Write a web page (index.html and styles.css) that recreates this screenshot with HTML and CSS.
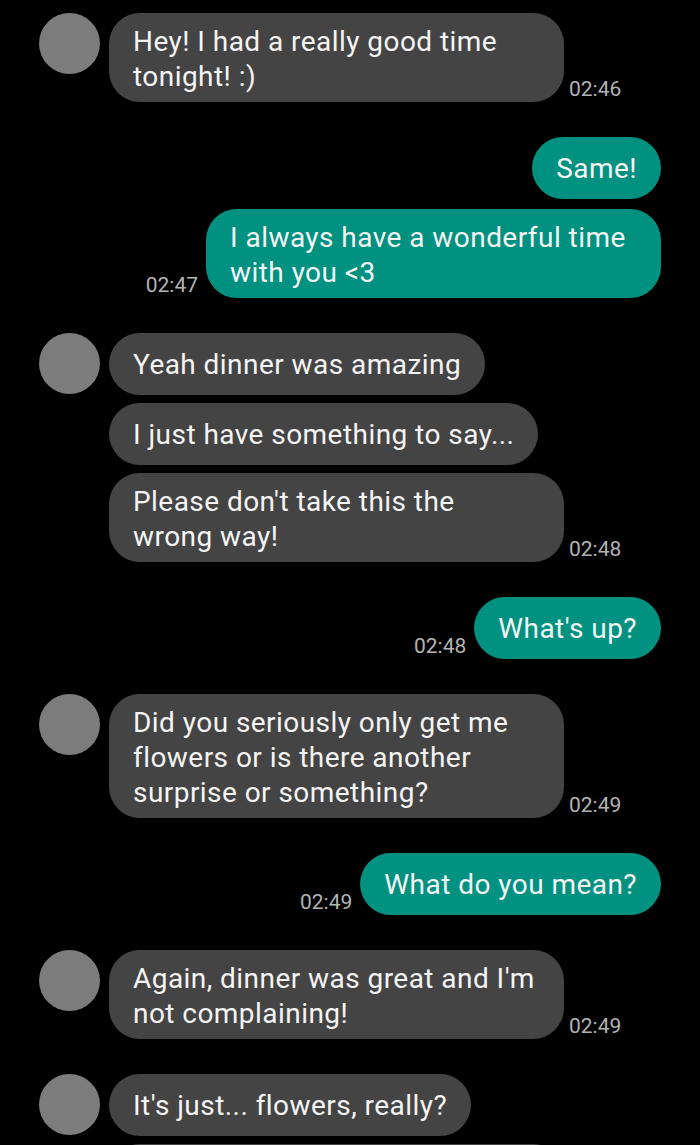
FILE: index.html
```html
<!DOCTYPE html>
<html lang="en">
<head>
    <meta charset="UTF-8">
    <meta name="viewport" content="width=device-width, initial-scale=1.0">
    <title>Chat</title>

    <link rel="stylesheet" href="styles.css">
</head>
<body>

    <div class="chat">

        <div class="group in">
            <div class="avatar"></div>
            <div class="stack">
                <div class="line">
                    <div class="bubble wide">Hey! I had a really good time<br>tonight! :)</div>
                    <span class="time">02:46</span>
                </div>
            </div>
        </div>

        <div class="group out">
            <div class="line">
                <div class="bubble">Same!</div>
            </div>
            <div class="line">
                <span class="time">02:47</span>
                <div class="bubble wide">I always have a wonderful time<br>with you &lt;3</div>
            </div>
        </div>

        <div class="group in">
            <div class="avatar"></div>
            <div class="stack">
                <div class="line">
                    <div class="bubble">Yeah dinner was amazing</div>
                </div>
                <div class="line">
                    <div class="bubble">I just have something to say...</div>
                </div>
                <div class="line">
                    <div class="bubble wide">Please don't take this the<br>wrong way!</div>
                    <span class="time">02:48</span>
                </div>
            </div>
        </div>

        <div class="group out">
            <div class="line">
                <span class="time">02:48</span>
                <div class="bubble">What's up?</div>
            </div>
        </div>

        <div class="group in">
            <div class="avatar"></div>
            <div class="stack">
                <div class="line">
                    <div class="bubble wide">Did you seriously only get me<br>flowers or is there another<br>surprise or something?</div>
                    <span class="time">02:49</span>
                </div>
            </div>
        </div>

        <div class="group out">
            <div class="line">
                <span class="time">02:49</span>
                <div class="bubble">What do you mean?</div>
            </div>
        </div>

        <div class="group in">
            <div class="avatar"></div>
            <div class="stack">
                <div class="line">
                    <div class="bubble wide">Again, dinner was great and I'm<br>not complaining!</div>
                    <span class="time">02:49</span>
                </div>
            </div>
        </div>

        <div class="group in">
            <div class="avatar"></div>
            <div class="stack">
                <div class="line">
                    <div class="bubble">It's just... flowers, really?</div>
                </div>
                <div class="line">
                    <div class="bubble wide">&nbsp;</div>
                </div>
            </div>
        </div>

    </div>

</body>
</html>
```

FILE: styles.css
```css
body {
    margin: 0;
    padding: 0;
    background-color: #000;
    font-family: Roboto, "Liberation Sans", sans-serif;
    overflow: hidden;
    height: 100vh;
}

.chat {
    display: flex;
    flex-direction: column;
    gap: 35px;
    padding: 13px 39px 0 39px;
}

.group {
    display: flex;
}

.group.in {
    flex-direction: row;
    align-items: flex-start;
    gap: 9px;
}

.group.out {
    flex-direction: column;
    align-items: flex-end;
    gap: 10px;
}

.avatar {
    flex: none;
    width: 61px;
    height: 61px;
    border-radius: 50%;
    background-color: #7c7c7c;
}

.stack {
    display: flex;
    flex-direction: column;
    gap: 8px;
}

.line {
    display: flex;
    align-items: flex-end;
}

.bubble {
    box-sizing: border-box;
    min-height: 62px;
    padding: 10px 24px 9px;
    display: flex;
    align-items: center;
    border-radius: 31px;
    background-color: #444444;
    color: #f4f4f4;
    font-size: 28px;
    letter-spacing: 0.45px;
    line-height: 35px;
    white-space: nowrap;
}

.bubble.wide {
    width: 455px;
    display: block;
    padding-top: 11px;
    padding-bottom: 8px;
}

.out .bubble {
    background-color: #009180;
}

.time {
    font-size: 21px;
    line-height: 20px;
    color: #b3b3b3;
    margin-bottom: 3px;
}

.in .time {
    margin-left: 5px;
}

.out .time {
    margin-right: 8px;
}
```
